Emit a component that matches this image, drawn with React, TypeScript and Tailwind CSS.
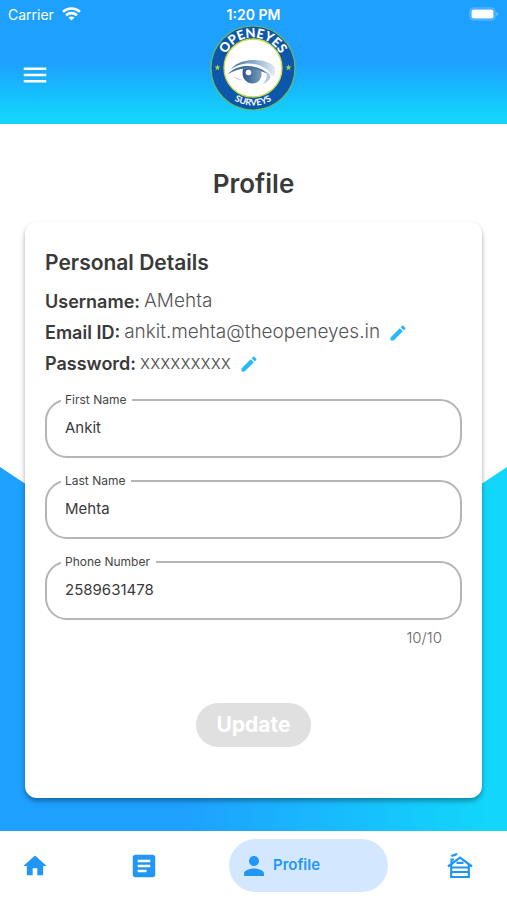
import type { ReactNode } from "react";
import { MdArticle, MdEdit, MdHome, MdMenu, MdPerson } from "react-icons/md";

const STAR = "M0 -3 L0.8 -0.9 L3 -0.9 L1.2 0.5 L1.9 2.7 L0 1.4 L-1.9 2.7 L-1.2 0.5 L-3 -0.9 L-0.8 -0.9 Z";

const WifiIcon = () => (
  <svg width="19" height="14" viewBox="0 0 19 14" fill="none" stroke="white" strokeWidth="2.6">
    <path d="M1 4.9C5.8 0.4 13.2 0.4 18 4.9" />
    <path d="M4.1 8.2C7.2 5.4 11.8 5.4 14.9 8.2" />
    <path d="M6.5 10.6L9.5 13.6L12.5 10.6C10.7 9.1 8.3 9.1 6.5 10.6Z" fill="white" stroke="none" />
  </svg>
);

const BatteryIcon = () => (
  <svg width="30" height="14" viewBox="0 0 30 14" fill="none">
    <rect x="1" y="1" width="25" height="12" rx="3.5" stroke="white" strokeOpacity="0.35" />
    <rect x="2.5" y="2.5" width="22" height="9" rx="2" fill="white" />
    <path d="M27.5 5C29.3 5.6 29.3 8.4 27.5 9Z" fill="white" fillOpacity="0.5" />
  </svg>
);

const CabinIcon = () => (
  <svg width="28" height="28" viewBox="0 0 28 28" fill="none" stroke="currentColor" strokeWidth="2.2">
    <path d="M2 14.5L14 5.5L26 14.5" />
    <path d="M5.2 12V25H22.8V12" />
    <path d="M5 15.5H23M5 20H23M10.5 10.8H17.5" />
    <path d="M5.5 11.5V7.5H8" />
    <path d="M5.5 4.5C6.5 2.5 8.5 4.5 11 1.5" />
  </svg>
);

const Logo = () => (
  <svg width="86" height="86" viewBox="0 0 86 86" role="img" aria-label="OpenEyes Surveys" className="overflow-visible">
    <defs>
      <path id="arc-top" d="M12.5 43A30.5 30.5 0 0 1 73.5 43" />
      <path id="arc-bottom" d="M5.5 43A37.5 37.5 0 0 0 80.5 43" />
      <linearGradient id="brow" x1="0" y1="0" x2="1" y2="0">
        <stop offset="0" stopColor="#3f6b9b" />
        <stop offset="0.5" stopColor="#86a8ca" />
        <stop offset="1" stopColor="#e3ecf5" />
      </linearGradient>
      <linearGradient id="iris" x1="0" y1="0" x2="1" y2="0">
        <stop offset="0" stopColor="#2a5688" />
        <stop offset="1" stopColor="#7d9dbf" />
      </linearGradient>
    </defs>
    <circle cx="43" cy="43" r="42" fill="#0d57ab" stroke="#72b85c" strokeWidth="1.2" />
    <circle cx="43" cy="43" r="29" fill="white" stroke="#c6dd3c" strokeWidth="1.3" />
    <text fill="white" fontFamily="Lato, sans-serif" fontWeight="900" fontSize="13">
      <textPath href="#arc-top" startOffset="50%" textAnchor="middle">OPENEYES</textPath>
    </text>
    <text fill="white" fontFamily="Lato, sans-serif" fontWeight="700" fontSize="9">
      <textPath href="#arc-bottom" startOffset="50%" textAnchor="middle">SURVEYS</textPath>
    </text>
    <path d={STAR} transform="translate(7.5 42.5)" fill="#b5cf3b" />
    <path d={STAR} transform="translate(78.5 42.5)" fill="#b5cf3b" />
    {/* Sobrancelha */}
    <path
      d="M20 45C25 39 31 36.5 38 35.5C50 34 60 37 65 42C66 46 65 50 62 51C60 46 55 42 47 39.5C36 37 27 39.5 20 45Z"
      fill="url(#brow)"
    />
    {/* Olho */}
    <path
      d="M17.5 49.5C26 39.5 40 39 51 44C54 45.5 56 47 57 48.5C50 46 45 44.5 40 44C31 43 25 45 17.5 49.5Z"
      fill="#42709f"
    />
    <path d="M33 44C31 53 36 58.5 42.5 58.5C49 58.5 53 52 51 45.5C44 43 38 42.5 33 44Z" fill="url(#iris)" />
    <circle cx="38.5" cy="47.5" r="2.8" fill="white" />
    <path d="M55 46C63 49 62 55 53 59C57 54 58 50 55 46Z" fill="#b4c9de" />
    <path d="M23 51C26 53 29 54 32 54.5C29 55.5 26 54 23 51Z" fill="#a9c2db" />
  </svg>
);

const Detail = ({ label, value, editable }: { label: string; value: string; editable?: boolean }) => (
  <div className="flex h-[31px] items-center">
    <dt className="text-[18px] font-semibold">{label}:</dt>
    <dd className="ml-1 flex items-center text-[19px] font-light text-[#555555]">
      {value}
      {editable && (
        <button type="button" aria-label={`Edit ${label}`} className="ml-2 text-[#27b7fb]">
          <MdEdit size={20} />
        </button>
      )}
    </dd>
  </div>
);

type FieldProps = { id: string; label: string; value: string; type?: string; maxLength?: number };

const Field = ({ id, label, value, type = "text", maxLength }: FieldProps) => (
  <div className="relative">
    <label htmlFor={id} className="absolute -top-[7px] left-4 bg-white pr-[6px] pl-1 text-[12px] leading-4 text-[#444444]">
      {label}
    </label>
    <input
      id={id}
      type={type}
      defaultValue={value}
      maxLength={maxLength}
      className="h-[59px] w-full rounded-[22px] border-2 border-[#b5b5b5] bg-white px-[18px] pb-[2px] text-[15px] text-[#3a3a3a] outline-none"
    />
  </div>
);

const NavLink = ({ label, children }: { label: string; children: ReactNode }) => (
  <a href="#" aria-label={label} className="flex h-12 items-center justify-center">
    {children}
  </a>
);

const App = () => {
  return (
    <div className="flex min-h-screen flex-col bg-white font-[Inter,sans-serif] text-[#3a3a3a]">
      {/* Header */}
      <header className="h-[124px] bg-linear-to-b from-[#1ea0ff] from-50% to-[#14d4fb] to-95% text-white">
        <div className="grid h-7 grid-cols-3 items-center px-2 text-[14px]">
          <div className="flex items-center gap-2">
            Carrier <WifiIcon />
          </div>
          <span className="text-center font-semibold">1:20 PM</span>
          <div className="flex justify-end">
            <BatteryIcon />
          </div>
        </div>
        <div className="-mt-[3px] grid grid-cols-3 items-center px-5">
          <button type="button" aria-label="Menu" className="mt-[14px] w-[30px]">
            <MdMenu size={30} />
          </button>
          <div className="flex justify-center">
            <Logo />
          </div>
        </div>
      </header>

      {/* Profile */}
      <main className="relative flex-1 px-[25px] pb-[33px]">
        <div className="absolute inset-x-0 top-[343px] bottom-0 bg-[linear-gradient(90deg,#1ea0ff_36%,#12d6fb_96%)] [clip-path:polygon(0_0,50%_168px,100%_0,100%_100%,0_100%)]" />
        <h1 className="flex h-[98px] items-center justify-center pt-5 text-[26px] font-semibold">Profile</h1>

        <section className="relative rounded-xl bg-white px-5 pt-[26px] pb-[51px] shadow-[0_3px_5px_rgba(0,0,0,0.35)]">
          <h2 className="text-[21px] leading-[30px] font-semibold">Personal Details</h2>
          <dl className="mt-2">
            <Detail label="Username" value="AMehta" />
            <Detail label="Email ID" value="ankit.mehta@theopeneyes.in" editable />
            <Detail label="Password" value="xxxxxxxxx" editable />
          </dl>

          <form className="mt-5">
            <div className="flex flex-col gap-[22px]">
              <Field id="first-name" label="First Name" value="Ankit" />
              <Field id="last-name" label="Last Name" value="Mehta" />
              <Field id="phone" label="Phone Number" value="2589631478" type="tel" maxLength={10} />
            </div>
            <p className="mt-[6px] pr-5 text-right text-[15px] leading-6 font-light text-[#666666]">10/10</p>
            <div className="mt-[53px] flex justify-center">
              <button type="button" disabled className="h-11 rounded-full bg-[#e0e0e0] px-5 text-[21px] font-bold text-white">
                Update
              </button>
            </div>
          </form>
        </section>
      </main>

      {/* Menu inferior */}
      <nav className="grid h-[69px] grid-cols-[70fr_148fr_195fr_94fr] items-center bg-white text-[#2196f3]">
        <NavLink label="Home">
          <MdHome size={28} />
        </NavLink>
        <NavLink label="Surveys">
          <MdArticle size={30} />
        </NavLink>
        <a
          href="#"
          aria-current="page"
          className="ml-[11px] flex h-[53px] w-[159px] items-center gap-1 rounded-full bg-[#d3e8fe] pl-[10px] text-[15px] font-semibold"
        >
          <MdPerson size={30} />
          Profile
        </a>
        <NavLink label="Cabin">
          <CabinIcon />
        </NavLink>
      </nav>
    </div>
  );
};

export default App;
